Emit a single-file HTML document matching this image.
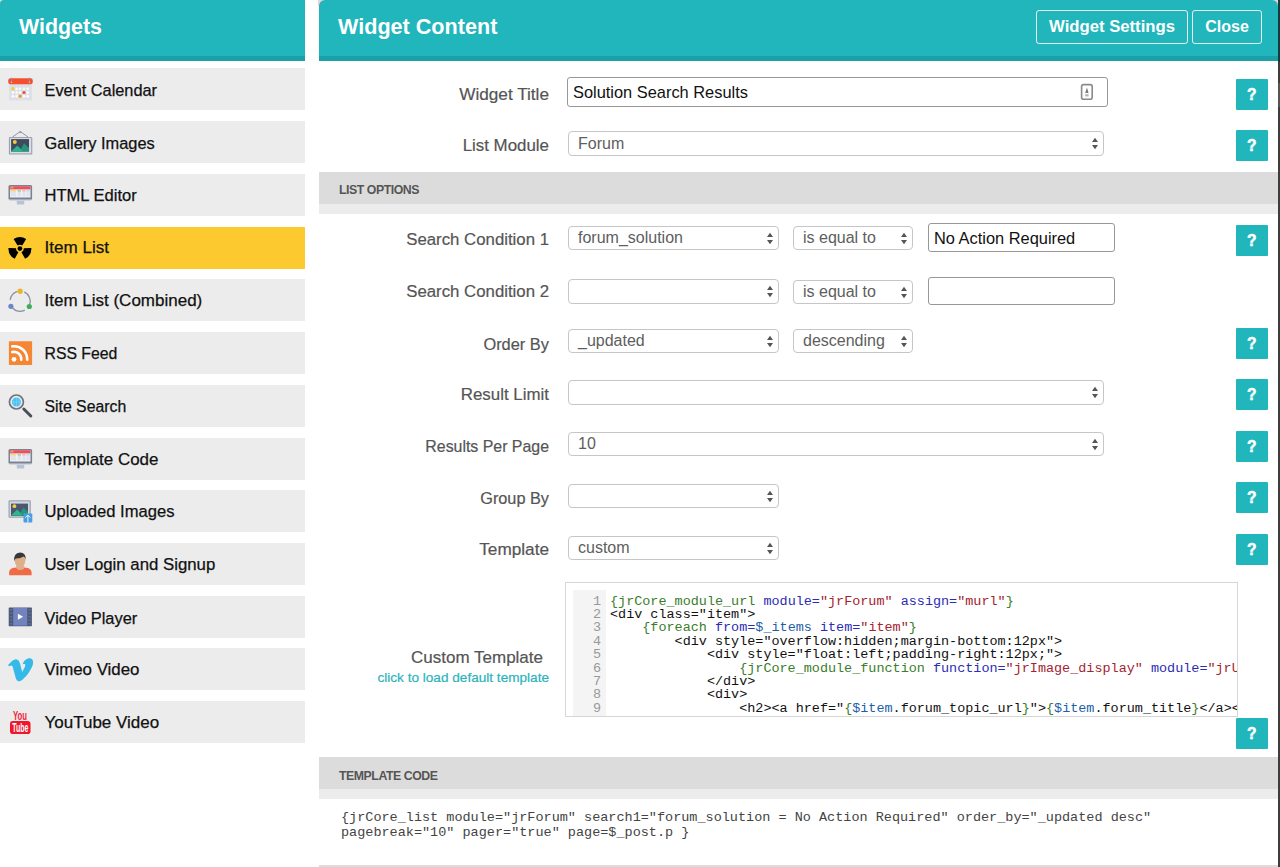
<!DOCTYPE html>
<html><head><meta charset="utf-8"><style>
*{margin:0;padding:0;box-sizing:border-box}
html,body{width:1280px;height:867px;overflow:hidden;background:#fff;font-family:"Liberation Sans",sans-serif}
.t{position:absolute;white-space:nowrap;line-height:20px}
#side-hd{position:absolute;left:0;top:0;width:305px;height:61px;background:#21b5bc;border-bottom:5px solid #1c9fa6;border-top-left-radius:4px}
.hdt{position:absolute;font-size:21.4px;font-weight:bold;color:#fff;line-height:26px;white-space:nowrap}
.it{position:absolute;left:0;width:305px;height:42px;background:#ececec}
.it.on{background:#fcc92f}
.it span{position:absolute;left:44.5px;top:11px;font-size:16.5px;line-height:20px;color:#111;-webkit-text-stroke:0.25px #111;white-space:nowrap}
#main-hd{position:absolute;left:319px;top:0;width:959px;height:61px;background:#21b5bc;border-bottom:5px solid #1c9fa6;border-top-left-radius:6px;border-top-right-radius:6px}
.btn{position:absolute;top:10px;height:34px;border:1.3px solid #e6f6f7;border-radius:3px;color:#fff;font-weight:bold;line-height:31px;text-align:center;white-space:nowrap}
.lab{position:absolute;right:731px;line-height:20px;color:#555;-webkit-text-stroke:0.2px currentColor;white-space:nowrap;text-align:right}
.sb{position:absolute;border:1px solid #c6c6c6;border-radius:4px;background:#fff}
.sb svg{position:absolute;right:4.5px;top:50%;margin-top:-6.5px}
.tb{position:absolute;border:1.6px solid #979797;border-radius:3px;background:#fff}
.st{position:absolute;font-size:16px;line-height:20px;color:#5e5e5e;white-space:nowrap}
.it2{position:absolute;font-size:16.4px;line-height:20px;color:#111;white-space:nowrap}
.help{position:absolute;left:1236px;width:31.5px;height:31px;background:#21b5bc;border-radius:1px}
.help svg{position:absolute;left:0;top:0}
.bar{position:absolute;left:319px;width:959px;height:42px;background:#dcdcdc;border-bottom:10px solid #ececec}
.bar span{position:absolute;left:20px;font-weight:bold;color:#555;line-height:14px;white-space:nowrap}
#rstrip{position:absolute;left:1278px;top:0;width:2px;height:867px;background:#3d3d3d}
.cm{position:absolute;left:565px;top:582px;width:673px;height:135px;border:1.3px solid #d6d6d6;background:#fff;overflow:hidden}
.gut{position:absolute;left:7px;top:7px;width:33px;height:130px;background:#f4f4f4}
.code{position:absolute;left:44px;top:11.5px;font-family:"Liberation Mono",monospace;font-size:13.46px;line-height:13.4px;color:#111;white-space:pre}
.ln{position:absolute;left:7px;top:11.5px;width:28px;text-align:right;font-family:"Liberation Mono",monospace;font-size:13.46px;line-height:13.4px;color:#999;white-space:pre}
.g{color:#3a7d2a} .b{color:#2b2bb5} .r{color:#a3232f} .v{color:#1b60a8}
.tc{position:absolute;left:341px;top:809.5px;font-family:"Liberation Mono",monospace;font-size:13.5px;line-height:15.5px;color:#444;white-space:pre}
</style></head><body>
<div style="position:absolute;left:0;top:0;width:5px;height:5px;background:#e3d9d2"></div><div style="position:absolute;left:318px;top:0;width:6px;height:6px;background:#e3d9d2"></div><div style="position:absolute;left:1272px;top:0;width:6px;height:6px;background:#e3d9d2"></div>
<div id="side-hd"><span class="hdt" style="left:19px;top:14px">Widgets</span></div>
<div class="it" style="top:68px"><span style="font-size:16.34px;top:11.74px">Event Calendar</span></div>
<div class="it" style="top:121px"><span style="font-size:16.41px;top:11.71px">Gallery Images</span></div>
<div class="it" style="top:174px"><span style="font-size:16.56px;top:11.66px">HTML Editor</span></div>
<div class="it on" style="top:227px"><span style="font-size:17.1px;top:11.47px">Item List</span></div>
<div class="it" style="top:279px"><span style="font-size:17.0px;top:11.51px">Item List (Combined)</span></div>
<div class="it" style="top:332px"><span style="font-size:15.8px;top:11.93px">RSS Feed</span></div>
<div class="it" style="top:385px"><span style="font-size:15.8px;top:11.93px">Site Search</span></div>
<div class="it" style="top:438px"><span style="font-size:16.94px;top:11.53px">Template Code</span></div>
<div class="it" style="top:490px"><span style="font-size:16.58px;top:11.66px">Uploaded Images</span></div>
<div class="it" style="top:543px"><span style="font-size:16.79px;top:11.58px">User Login and Signup</span></div>
<div class="it" style="top:596px"><span style="font-size:16.41px;top:11.71px">Video Player</span></div>
<div class="it" style="top:648px"><span style="font-size:16.87px;top:11.55px">Vimeo Video</span></div>
<div class="it" style="top:701px"><span style="font-size:17.01px;top:11.51px">YouTube Video</span></div>
<svg style="position:absolute;left:0;top:0" width="305" height="760" viewBox="0 0 305 760">
<!-- calendar -->
<rect x="9" y="84" width="23" height="16.5" rx="1" fill="#dde1e7"/>
<rect x="8.3" y="78.2" width="24.4" height="6" rx="2" fill="#f4502f"/>
<rect x="11" y="77.8" width="1.1" height="4.4" fill="#8a8c9a"/><rect x="28.9" y="77.8" width="1.1" height="4.4" fill="#8a8c9a"/><circle cx="11.5" cy="82.3" r="0.8" fill="#f7b9a8"/><circle cx="29.4" cy="82.3" r="0.8" fill="#f7b9a8"/>
<g fill="#fff">
<circle cx="16.6" cy="88.8" r="1.2"/><circle cx="20.1" cy="88.8" r="1.2"/><circle cx="24" cy="88.8" r="1.2"/><circle cx="27.6" cy="88.8" r="1.2"/>
<circle cx="12.9" cy="92.5" r="1.2"/><circle cx="16.6" cy="92.5" r="1.2"/><circle cx="20.1" cy="92.5" r="1.2"/><circle cx="27.6" cy="92.5" r="1.2"/>
<circle cx="12.9" cy="96.2" r="1.2"/><circle cx="16.6" cy="96.2" r="1.2"/><circle cx="24" cy="96.2" r="1.2"/><circle cx="27.6" cy="96.2" r="1.2"/>
</g>
<circle cx="12.9" cy="88.8" r="1.7" fill="#f2cd3a"/><circle cx="24" cy="92.5" r="1.6" fill="#ee4b3a"/><circle cx="20.1" cy="96.2" r="1.6" fill="#f5952a"/>
<!-- gallery -->
<path d="M12.5 137 L20.3 131.5 L28 137" fill="none" stroke="#8f95a3" stroke-width="1"/>
<circle cx="20.3" cy="132.3" r="1" fill="#999"/>
<rect x="8.9" y="136.9" width="23.4" height="17.7" rx="1.2" fill="#9ba1ae"/>
<rect x="10" y="138" width="21.2" height="15.4" fill="#d9dde3"/>
<rect x="11.1" y="139.1" width="17.9" height="12.4" fill="#3e4a5d"/>
<path d="M11.1 151.5 L17.3 146 L21 149 L24 143.2 L29 148 L29 151.5 Z" fill="#24957a"/>
<path d="M11.1 151.5 L17.3 145.8 L23 151.5 Z" fill="#2fb38a"/>
<circle cx="14.8" cy="141.9" r="2" fill="#efc93c"/>
<!-- monitor x2 -->
<g>
<rect x="8.5" y="185.1" width="23.6" height="14.6" rx="1.5" fill="#7b818e"/>
<rect x="10" y="186.2" width="20.5" height="11.3" fill="#f1f3f7"/>
<rect x="10" y="186.2" width="20.5" height="3.2" fill="#e6525e"/><rect x="10.5" y="186.8" width="3" height="1.6" fill="#f39a6a"/>
<rect x="10.5" y="190.2" width="5.5" height="1.4" fill="#f2d36c"/><rect x="17.5" y="190.2" width="3.5" height="1.4" fill="#8fd37a"/><rect x="22.3" y="190.2" width="3.2" height="1.4" fill="#f2a7b0"/><rect x="26.5" y="190.2" width="3.2" height="1.4" fill="#a8dbf2"/>
<rect x="10.5" y="192" width="5.5" height="4.5" fill="#dfe4ee"/><rect x="17.5" y="192" width="3.5" height="4.5" fill="#dfe4ee"/><rect x="22.3" y="192" width="3.2" height="4.5" fill="#dfe4ee"/><rect x="26.5" y="192" width="3.2" height="4.5" fill="#dfe4ee"/>
<rect x="9.5" y="199.7" width="21.6" height="1.2" fill="#cdd5e3"/>
<rect x="16.8" y="200.8" width="7.4" height="3.7" fill="#b7c2d6"/>
</g>
<g transform="translate(0 264)">
<rect x="8.5" y="185.1" width="23.6" height="14.6" rx="1.5" fill="#7b818e"/>
<rect x="10" y="186.2" width="20.5" height="11.3" fill="#f1f3f7"/>
<rect x="10" y="186.2" width="20.5" height="3.2" fill="#e6525e"/><rect x="10.5" y="186.8" width="3" height="1.6" fill="#f39a6a"/>
<rect x="10.5" y="190.2" width="5.5" height="1.4" fill="#f2d36c"/><rect x="17.5" y="190.2" width="3.5" height="1.4" fill="#8fd37a"/><rect x="22.3" y="190.2" width="3.2" height="1.4" fill="#f2a7b0"/><rect x="26.5" y="190.2" width="3.2" height="1.4" fill="#a8dbf2"/>
<rect x="10.5" y="192" width="5.5" height="4.5" fill="#dfe4ee"/><rect x="17.5" y="192" width="3.5" height="4.5" fill="#dfe4ee"/><rect x="22.3" y="192" width="3.2" height="4.5" fill="#dfe4ee"/><rect x="26.5" y="192" width="3.2" height="4.5" fill="#dfe4ee"/>
<rect x="9.5" y="199.7" width="21.6" height="1.2" fill="#cdd5e3"/>
<rect x="16.8" y="200.8" width="7.4" height="3.7" fill="#b7c2d6"/>
</g>
<!-- radiation -->
<g fill="#000" transform="translate(19.9 248.6)">
<circle r="2.4"/>
<path d="M-6.3 -9.6 A11.5 11.5 0 0 1 6.3 -9.6 L2.3 -3.1 A3.8 3.8 0 0 0 -2.3 -3.1 Z"/>
<path d="M-6.3 -9.6 A11.5 11.5 0 0 1 6.3 -9.6 L2.3 -3.1 A3.8 3.8 0 0 0 -2.3 -3.1 Z" transform="rotate(120)"/>
<path d="M-6.3 -9.6 A11.5 11.5 0 0 1 6.3 -9.6 L2.3 -3.1 A3.8 3.8 0 0 0 -2.3 -3.1 Z" transform="rotate(240)"/>
</g>
<!-- combined -->
<g fill="none" stroke="#8b919d" stroke-width="1.3" stroke-linecap="round">
<path d="M16.8 291.6 A10 10 0 0 0 10.3 299.5"/>
<path d="M24.6 292.2 A10 10 0 0 1 29.8 304"/>
<path d="M12.6 308 A10 10 0 0 0 24.3 310.3"/>
</g>
<circle cx="20.1" cy="291.3" r="2.7" fill="#ebb52f"/>
<circle cx="10.9" cy="306.3" r="2.6" fill="#6f85c9"/>
<circle cx="29.3" cy="306.5" r="2.6" fill="#3fae5a"/>
<!-- rss -->
<rect x="8.9" y="341.2" width="23.2" height="23.7" rx="0.6" fill="#f58634"/>
<circle cx="14" cy="359.3" r="2.4" fill="#fff"/>
<path d="M12.3 352.1 A7.2 7.2 0 0 1 21.2 359.6" fill="none" stroke="#fff" stroke-width="2.6" stroke-linecap="round"/>
<path d="M12.3 346.4 A13 13 0 0 1 27.2 359.6" fill="none" stroke="#fff" stroke-width="2.6" stroke-linecap="round"/>
<!-- search -->
<circle cx="16.4" cy="402" r="7" fill="#e8eef3" stroke="#6d727c" stroke-width="1.7"/>
<circle cx="16.4" cy="402" r="4.6" fill="#45c0ef"/>
<path d="M14 398 Q13 402 14 406 M16.4 397.5 V406.5 M18.8 398 Q19.8 402 18.8 406 M12 402 H21" stroke="#8fd8f5" stroke-width="0.6" fill="none"/>
<path d="M23.8 409 L30.8 416" stroke="#4b4f5a" stroke-width="3" stroke-linecap="round"/>
<!-- uploaded -->
<rect x="8.5" y="500.2" width="22.3" height="17.5" rx="1.2" fill="#9ba1ae"/>
<rect x="9.7" y="501.4" width="19.9" height="15.2" fill="#d3d8df"/>
<rect x="11" y="503.6" width="17" height="12.4" fill="#4b5670"/>
<path d="M11 515.5 L17.2 509.8 L20.5 512.5 L23.5 507.5 L28 512 L28 515.5 Z" fill="#22987a"/>
<path d="M11 515.5 L17.2 509.8 L22.5 515.5 Z" fill="#2fb68f"/>
<circle cx="14.4" cy="506.2" r="1.9" fill="#efcc44"/>
<rect x="23.5" y="513.5" width="8.8" height="9" rx="0.8" fill="#4a9de0"/>
<path d="M27.9 522.5 V515.6 M25.4 517.6 L27.9 515.2 L30.4 517.6" stroke="#fff" stroke-width="0.9" fill="none"/>
<!-- user -->
<path d="M9.1 575.3 L9.1 572 Q9.5 568.5 14 567.8 L17.5 567.5 Q20 569.5 23 567.5 L26.5 567.8 Q31.2 568.5 31.6 572 L31.6 575.3 Z" fill="#f06a48"/>
<path d="M16 566 L16.8 569 Q20 571 23.8 569 L24.5 566 Z" fill="#deb08a"/>
<ellipse cx="20" cy="560.5" rx="5.3" ry="7.2" fill="#deb08a"/>
<path d="M14.2 561.5 Q13.3 552.6 20 552.4 Q26.6 552.6 25.8 561 Q25.5 557 23.5 556.5 Q20 558.8 15.8 558.5 Q14.5 559.5 14.2 561.5 Z" fill="#383838"/>
<!-- video -->
<rect x="8.7" y="607.4" width="23.2" height="18.8" rx="0.6" fill="#4c5979"/>
<rect x="13.2" y="608" width="14" height="17.6" fill="#7283c0"/>
<g fill="#5f6d8f"><rect x="9.7" y="609" width="2.6" height="1.6"/><rect x="9.7" y="612.5" width="2.6" height="1.6"/><rect x="9.7" y="616" width="2.6" height="1.6"/><rect x="9.7" y="619.5" width="2.6" height="1.6"/><rect x="9.7" y="623" width="2.6" height="1.6"/>
<rect x="28.3" y="609" width="2.6" height="1.6"/><rect x="28.3" y="612.5" width="2.6" height="1.6"/><rect x="28.3" y="616" width="2.6" height="1.6"/><rect x="28.3" y="619.5" width="2.6" height="1.6"/><rect x="28.3" y="623" width="2.6" height="1.6"/></g>
<path d="M17.9 613.7 L23.1 616.7 L17.9 619.7 Z" fill="#fff"/>
<!-- vimeo -->
<path d="M8 665 C10.5 662.5 13 659.5 15.5 659.2 C18.5 659 19.8 662 20.5 665.5 L22.2 672 C23.5 669.5 25.2 667 25.3 665.3 C25.4 664 24.2 663.8 22.5 664.5 C23.5 660.5 26.8 658.2 29.5 658.2 C32.3 658.2 33.5 660.5 33 663.8 C32.3 668.5 25.5 678.5 20.5 681 C17.8 682.2 16.3 680 15.6 677.5 L12.6 666.5 C12.2 665.2 10.8 665.2 9.2 666.3 Z" fill="#34b9e8"/>
<!-- youtube -->
<rect x="10" y="721" width="20.5" height="13" rx="2.8" fill="#f0172c"/>
<text x="0" y="0" font-family="Liberation Sans" font-weight="bold" font-size="12.5" fill="#f0213a" transform="translate(12.9 719.8) scale(0.62 1)">You</text>
<text x="0" y="0" font-family="Liberation Sans" font-weight="bold" font-size="12" fill="#fff" transform="translate(12.3 732.4) scale(0.58 1)">Tube</text>
</svg>

<div id="main-hd"><span class="hdt" style="left:19px;top:14px;font-size:21.6px">Widget Content</span><div class="btn" style="left:717px;width:152px;font-size:16.7px">Widget Settings</div><div class="btn" style="left:873px;width:70px;font-size:16px">Close</div></div>
<div id="rstrip"></div><div style="position:absolute;left:1278px;top:0;width:2px;height:62px;background:#123c3e"></div><div style="position:absolute;left:1278px;top:83px;width:2px;height:24px;background:#555"></div>
<div class="lab" style="right:731px;top:83.94px;font-size:17.2px">Widget Title</div>
<div class="tb" style="left:567px;top:77px;width:541px;height:30px"></div><div class="it2" style="left:573px;top:82.22px">Solution Search Results</div>
<svg style="position:absolute;left:1080px;top:83px" width="14" height="18" viewBox="0 0 14 18"><rect x="1.6" y="1.6" width="10.6" height="14.6" rx="2" fill="#fff" stroke="#8a8a8a" stroke-width="1.6"/><path d="M6.9 4.5 L8.6 10 L5.2 10 Z" fill="#7a7a7a"/><rect x="5.2" y="11.2" width="3.4" height="2.2" fill="#b5b5b5"/></svg>
<div class="lab" style="right:731px;top:135.74px;font-size:16.9px">List Module</div>
<div class="sb" style="left:568px;top:131px;width:536px;height:25px"><svg width="8" height="13" viewBox="0 0 8 13"><path d="M4 0.8 L7 5 L1 5 Z M4 12.2 L7 8 L1 8 Z" fill="#555"/></svg></div><div class="st" style="left:578px;top:133.76px">Forum</div>
<div class="bar" style="top:172px"><span style="top:11px;font-size:12.3px;letter-spacing:-0.45px">LIST OPTIONS</span></div>
<div class="lab" style="right:731px;top:230.28px;font-size:16.8px">Search Condition 1</div>
<div class="sb" style="left:568px;top:226px;width:211px;height:24px"><svg width="8" height="13" viewBox="0 0 8 13"><path d="M4 0.8 L7 5 L1 5 Z M4 12.2 L7 8 L1 8 Z" fill="#555"/></svg></div><div class="st" style="left:578px;top:228.26px">forum_solution</div>
<div class="sb" style="left:793px;top:226px;width:120px;height:24px"><svg width="8" height="13" viewBox="0 0 8 13"><path d="M4 0.8 L7 5 L1 5 Z M4 12.2 L7 8 L1 8 Z" fill="#555"/></svg></div><div class="st" style="left:803px;top:228.26px">is equal to</div>
<div class="tb" style="left:928px;top:223px;width:187px;height:29px"></div><div class="it2" style="left:934px;top:227.72px">No Action Required</div>
<div class="lab" style="right:731px;top:281.98px;font-size:16.8px">Search Condition 2</div>
<div class="sb" style="left:568px;top:279px;width:211px;height:25px"><svg width="8" height="13" viewBox="0 0 8 13"><path d="M4 0.8 L7 5 L1 5 Z M4 12.2 L7 8 L1 8 Z" fill="#555"/></svg></div>
<div class="sb" style="left:793px;top:280px;width:120px;height:24px"><svg width="8" height="13" viewBox="0 0 8 13"><path d="M4 0.8 L7 5 L1 5 Z M4 12.2 L7 8 L1 8 Z" fill="#555"/></svg></div><div class="st" style="left:803px;top:282.26px">is equal to</div>
<div class="tb" style="left:928px;top:277px;width:187px;height:28px"></div>
<div class="lab" style="right:731px;top:333.72px;font-size:16.4px">Order By</div>
<div class="sb" style="left:568px;top:329px;width:211px;height:24px"><svg width="8" height="13" viewBox="0 0 8 13"><path d="M4 0.8 L7 5 L1 5 Z M4 12.2 L7 8 L1 8 Z" fill="#555"/></svg></div><div class="st" style="left:578px;top:331.26px">_updated</div>
<div class="sb" style="left:793px;top:329px;width:120px;height:24px"><svg width="8" height="13" viewBox="0 0 8 13"><path d="M4 0.8 L7 5 L1 5 Z M4 12.2 L7 8 L1 8 Z" fill="#555"/></svg></div><div class="st" style="left:803px;top:331.26px">descending</div>
<div class="lab" style="right:731px;top:384.74px;font-size:16.9px">Result Limit</div>
<div class="sb" style="left:568px;top:380px;width:536px;height:25px"><svg width="8" height="13" viewBox="0 0 8 13"><path d="M4 0.8 L7 5 L1 5 Z M4 12.2 L7 8 L1 8 Z" fill="#555"/></svg></div>
<div class="lab" style="right:731px;top:436.59px;font-size:15.9px">Results Per Page</div>
<div class="sb" style="left:568px;top:432px;width:536px;height:24px"><svg width="8" height="13" viewBox="0 0 8 13"><path d="M4 0.8 L7 5 L1 5 Z M4 12.2 L7 8 L1 8 Z" fill="#555"/></svg></div><div class="st" style="left:578px;top:434.26px">10</div>
<div class="lab" style="right:731px;top:487.95px;font-size:16.3px">Group By</div>
<div class="sb" style="left:568px;top:484px;width:211px;height:24px"><svg width="8" height="13" viewBox="0 0 8 13"><path d="M4 0.8 L7 5 L1 5 Z M4 12.2 L7 8 L1 8 Z" fill="#555"/></svg></div>
<div class="lab" style="right:731px;top:539.44px;font-size:17.2px">Template</div>
<div class="sb" style="left:568px;top:536px;width:211px;height:24px"><svg width="8" height="13" viewBox="0 0 8 13"><path d="M4 0.8 L7 5 L1 5 Z M4 12.2 L7 8 L1 8 Z" fill="#555"/></svg></div><div class="st" style="left:578px;top:538.26px">custom</div>
<div class="help" style="top:79px"><svg width="31" height="31" viewBox="0 0 31 31"><text x="15.8" y="20.9" text-anchor="middle" font-family="Liberation Sans" font-weight="bold" font-size="15.6" fill="#fff" stroke="#fff" stroke-width="0.5">?</text></svg></div>
<div class="help" style="top:130px"><svg width="31" height="31" viewBox="0 0 31 31"><text x="15.8" y="20.9" text-anchor="middle" font-family="Liberation Sans" font-weight="bold" font-size="15.6" fill="#fff" stroke="#fff" stroke-width="0.5">?</text></svg></div>
<div class="help" style="top:225px"><svg width="31" height="31" viewBox="0 0 31 31"><text x="15.8" y="20.9" text-anchor="middle" font-family="Liberation Sans" font-weight="bold" font-size="15.6" fill="#fff" stroke="#fff" stroke-width="0.5">?</text></svg></div>
<div class="help" style="top:328px"><svg width="31" height="31" viewBox="0 0 31 31"><text x="15.8" y="20.9" text-anchor="middle" font-family="Liberation Sans" font-weight="bold" font-size="15.6" fill="#fff" stroke="#fff" stroke-width="0.5">?</text></svg></div>
<div class="help" style="top:379px"><svg width="31" height="31" viewBox="0 0 31 31"><text x="15.8" y="20.9" text-anchor="middle" font-family="Liberation Sans" font-weight="bold" font-size="15.6" fill="#fff" stroke="#fff" stroke-width="0.5">?</text></svg></div>
<div class="help" style="top:431px"><svg width="31" height="31" viewBox="0 0 31 31"><text x="15.8" y="20.9" text-anchor="middle" font-family="Liberation Sans" font-weight="bold" font-size="15.6" fill="#fff" stroke="#fff" stroke-width="0.5">?</text></svg></div>
<div class="help" style="top:482px"><svg width="31" height="31" viewBox="0 0 31 31"><text x="15.8" y="20.9" text-anchor="middle" font-family="Liberation Sans" font-weight="bold" font-size="15.6" fill="#fff" stroke="#fff" stroke-width="0.5">?</text></svg></div>
<div class="help" style="top:534px"><svg width="31" height="31" viewBox="0 0 31 31"><text x="15.8" y="20.9" text-anchor="middle" font-family="Liberation Sans" font-weight="bold" font-size="15.6" fill="#fff" stroke="#fff" stroke-width="0.5">?</text></svg></div>
<div class="help" style="top:718px"><svg width="31" height="31" viewBox="0 0 31 31"><text x="15.8" y="20.9" text-anchor="middle" font-family="Liberation Sans" font-weight="bold" font-size="15.6" fill="#fff" stroke="#fff" stroke-width="0.5">?</text></svg></div>
<div class="lab" style="right:737px;top:647.61px;font-size:17px">Custom Template</div>
<div class="lab" style="right:731px;top:667.69px;font-size:13.6px;color:#2bb3bb">click to load default template</div>
<div class="cm"><div class="gut"></div><div class="ln">1
2
3
4
5
6
7
8
9</div><div class="code"><span class="g">{jrCore_module_url</span> <span class="b">module=</span><span class="r">"jrForum"</span> <span class="b">assign=</span><span class="r">"murl"</span><span class="g">}</span>
&lt;div class="item"&gt;
    <span class="g">{foreach</span> <span class="b">from=</span><span class="v">$_items</span> <span class="b">item=</span><span class="r">"item"</span><span class="g">}</span>
        &lt;div style="overflow:hidden;margin-bottom:12px"&gt;
            &lt;div style="float:left;padding-right:12px;"&gt;
                <span class="g">{jrCore_module_function</span> <span class="b">function=</span><span class="r">"jrImage_display"</span> <span class="b">module=</span><span class="r">"jrUser"</span>
            &lt;/div&gt;
            &lt;div&gt;
                &lt;h2&gt;&lt;a href="<span class="g">{</span><span class="v">$item</span>.forum_topic_url<span class="g">}</span>"&gt;<span class="g">{</span><span class="v">$item</span>.forum_title<span class="g">}</span>&lt;/a&gt;&lt;/h2&gt;</div></div>
<div class="bar" style="top:757px"><span style="top:11.5px;font-size:12.3px;letter-spacing:-0.45px">TEMPLATE CODE</span></div>
<div class="tc">{jrCore_list module="jrForum" search1="forum_solution = No Action Required" order_by="_updated desc"
pagebreak="10" pager="true" page=$_post.p }</div>
<div class="bar" style="top:865px"></div>
</body></html>
